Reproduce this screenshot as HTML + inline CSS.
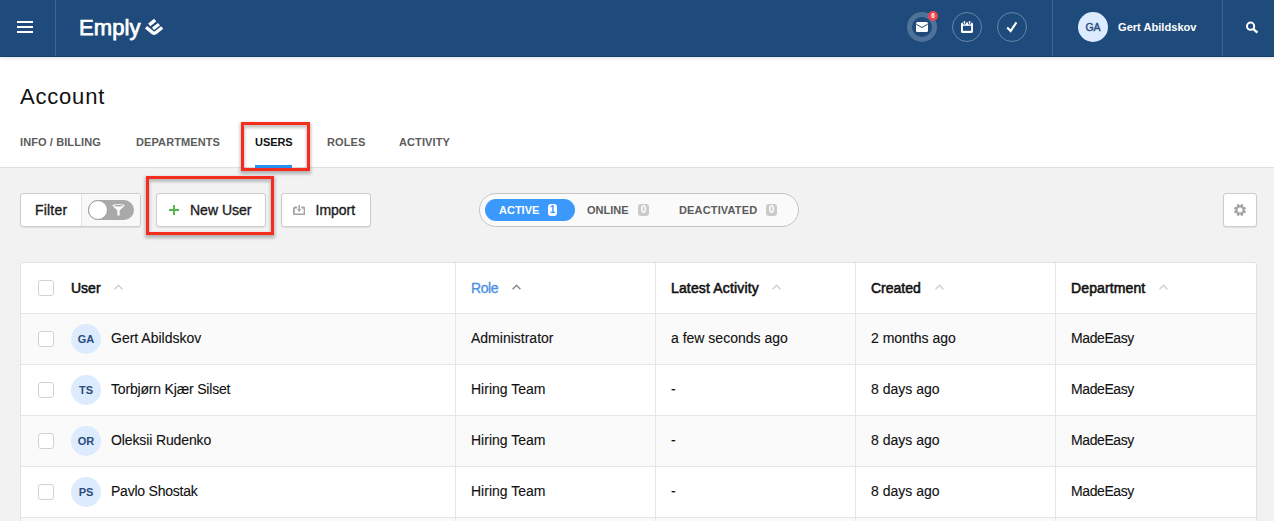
<!DOCTYPE html>
<html>
<head>
<meta charset="utf-8">
<title>Account</title>
<style>
*{box-sizing:border-box;margin:0;padding:0}
html,body{width:1274px;height:521px;overflow:hidden}
body{position:relative;background:#f2f2f2;font-family:"Liberation Sans",sans-serif;color:#111;font-size:14px}
.abs{position:absolute}
/* header */
#hdr{position:absolute;left:0;top:0;width:1274px;height:57px;background:#1e4b7b;border-bottom:1px solid #133f70;box-shadow:0 1px 4px rgba(0,0,0,.13);z-index:5}
.vdiv{position:absolute;top:0;width:1px;height:56px;background:rgba(255,255,255,.14)}
.bar{position:absolute;left:17px;width:16px;height:2px;background:#fff}
#logo{position:absolute;left:79px;top:14.6px;font-size:22px;line-height:26px;color:#fff;letter-spacing:.1px;-webkit-text-stroke:.75px #fff}
.circ{position:absolute;top:12px;width:30px;height:30px;border-radius:50%}
#uname{position:absolute;left:1118px;top:20px;font-size:11.1px;line-height:14px;font-weight:bold;color:#fff;white-space:nowrap}
/* title / tabs */
#top{position:absolute;left:0;top:57px;width:1274px;height:111px;background:#fff;border-bottom:1px solid #dfdfdf}
#title{position:absolute;left:20px;top:83px;font-size:22px;line-height:28px;color:#111;white-space:nowrap;letter-spacing:.8px}
.tab{position:absolute;top:135px;font-size:11px;line-height:14px;font-weight:bold;color:#5c5c5c;white-space:nowrap;letter-spacing:.1px}
.red{position:absolute;border:3px solid #f52c1e;box-shadow:0 2px 3px 1px rgba(0,0,0,.26), inset 0 2px 3px 1px rgba(0,0,0,.22);z-index:4}
/* toolbar */
.btn{position:absolute;top:193px;height:34px;background:#fff;border:1px solid #cdcdcd;border-radius:3px;box-shadow:0 1px 1px rgba(0,0,0,.08)}
.btxt{position:absolute;top:8px;font-size:14px;line-height:16px;white-space:nowrap;color:#1c1c1c;-webkit-text-stroke:.35px #1c1c1c}
.seg{position:absolute;font-size:11px;line-height:14px;font-weight:bold;white-space:nowrap;top:203px;color:#5a5a5a}
.bdg{position:absolute;top:204px;width:11px;height:12px;border-radius:3px;background:#c9c9c9;color:#fff;font-size:10px;line-height:12px;font-weight:bold;text-align:center}
/* table */
#tbl{position:absolute;left:20px;top:262px;width:1237px;height:300px;background:#fff;border:1px solid #e2e2e2;border-radius:3px;overflow:hidden}
.row{position:absolute;left:0;width:1235px;height:51px;border-top:1px solid #e6e6e6}
.row.odd{background:#fafafa}
.cdiv{position:absolute;top:0;width:1px;height:300px;background:#e6e6e6}
.cb{position:absolute;left:17px;width:16px;height:16px;border:1px solid #d2d2d2;border-radius:3px;background:#fff}
.th{position:absolute;top:17.5px;font-size:14px;line-height:16px;white-space:nowrap;color:#111;-webkit-text-stroke:.55px}
.td{position:absolute;top:16px;font-size:14px;line-height:16px;white-space:nowrap;color:#111;-webkit-text-stroke:.12px #111}
.av{position:absolute;left:50px;top:10px;width:30px;height:30px;border-radius:50%;background:#dcebfd;color:#2a4c7c;font-size:11px;line-height:30px;font-weight:bold;text-align:center}
.car{position:absolute;top:21px;width:9px;height:6px}
</style>
</head>
<body>

<!-- HEADER -->
<div id="hdr">
  <div class="bar" style="top:21px"></div>
  <div class="bar" style="top:26px"></div>
  <div class="bar" style="top:31px"></div>
  <div class="vdiv" style="left:55px"></div>
  <div id="logo">Emply</div>
  <svg class="abs" style="left:143px;top:17px" width="22" height="20" viewBox="143 16.2 22 20">
    <g fill="none" stroke="#fff" stroke-width="3.3">
      <path d="M146 26.4 L152.6 31.8 Q154.3 33.2 156 31.8 L162.2 26.6" stroke-linejoin="round"/>
      <path d="M149.2 24.1 L155.2 19.3"/>
      <path d="M153 28.0 L159 23.4"/>
    </g>
  </svg>

  <!-- mail -->
  <div class="circ" style="left:907px;border:5px solid rgba(255,255,255,.22)"></div>
  <svg class="abs" style="left:916px;top:22px" width="12" height="10" viewBox="0 0 12 10">
    <rect x="0" y="0" width="12" height="10" rx="1.5" fill="#fff"/>
    <path d="M0.3 2.2 L6 5.6 L11.7 2.2" fill="none" stroke="#1e4b7b" stroke-width="1"/>
  </svg>
  <div class="abs" style="left:928px;top:11px;width:10px;height:10px;border-radius:50%;background:#f0444c;color:#fff;font-size:6.5px;line-height:10px;font-weight:bold;text-align:center">6</div>

  <!-- calendar -->
  <div class="circ" style="left:952px;border:1px solid rgba(255,255,255,.32)"></div>
  <svg class="abs" style="left:961px;top:21px" width="12" height="12" viewBox="0 0 12 12">
    <rect x="0" y="1.5" width="12" height="10.5" rx="1.6" fill="#fff"/>
    <rect x="1.9" y="4.8" width="8.2" height="5" fill="#1e4b7b"/>
    <rect x="1.9" y="0" width="3" height="3.5" rx="1.2" fill="#1e4b7b"/>
    <rect x="7.1" y="0" width="3" height="3.5" rx="1.2" fill="#1e4b7b"/>
    <rect x="2.7" y="0" width="1.4" height="2.8" rx=".6" fill="#fff"/>
    <rect x="7.9" y="0" width="1.4" height="2.8" rx=".6" fill="#fff"/>
  </svg>

  <!-- check -->
  <div class="circ" style="left:997px;border:1px solid rgba(255,255,255,.32)"></div>
  <svg class="abs" style="left:1006px;top:21px" width="12" height="12" viewBox="0 0 12 12">
    <path d="M1.2 6.6 L4.6 10 L10.4 1.4" fill="none" stroke="#fff" stroke-width="2.1"/>
  </svg>

  <div class="vdiv" style="left:1052px"></div>
  <div class="circ" style="left:1078px;background:#dcebfd;color:#2d4f80;font-size:10.5px;line-height:30px;text-align:center;-webkit-text-stroke:.45px #2d4f80">GA</div>
  <div id="uname">Gert Abildskov</div>
  <div class="vdiv" style="left:1222px"></div>
  <svg class="abs" style="left:1245px;top:21px" width="14" height="13" viewBox="0 0 14 13">
    <circle cx="5.6" cy="5.2" r="3.6" fill="none" stroke="#fff" stroke-width="2"/>
    <path d="M8.2 7.8 L12.4 11.6" stroke="#fff" stroke-width="2.4" fill="none"/>
  </svg>
</div>

<!-- TITLE + TABS -->
<div id="top"></div>
<div id="title">Account</div>
<div class="tab" style="left:20px">INFO / BILLING</div>
<div class="tab" style="left:136px">DEPARTMENTS</div>
<div class="tab" style="left:255px;color:#111;letter-spacing:-.05px">USERS</div>
<div class="tab" style="left:327px">ROLES</div>
<div class="tab" style="left:399px">ACTIVITY</div>
<div class="abs" style="left:255px;top:165px;width:37px;height:3px;background:#2593f2"></div>
<div class="red" style="left:241px;top:122px;width:69px;height:49px"></div>

<!-- TOOLBAR -->
<div class="btn" style="left:20px;width:121px;overflow:hidden">
  <div class="abs" style="left:60px;top:0;width:60px;height:32px;background:#f8f8f8;border-left:1px solid #e2e2e2"></div>
  <div class="btxt" style="left:14px;letter-spacing:.2px">Filter</div>
  <div class="abs" style="left:67px;top:6px;width:46px;height:20px;border-radius:10px;background:#a9a9a9"></div>
  <div class="abs" style="left:67px;top:6px;width:20px;height:20px;border-radius:50%;background:#fff;border:1px solid #9c9c9c"></div>
  <svg class="abs" style="left:91px;top:10px" width="13" height="12" viewBox="0 0 13 12">
    <path d="M0.3 1.6 Q0.3 0.2 6.5 0.2 Q12.7 0.2 12.7 1.6 L7.6 6.6 L7.6 11.6 L5.4 11.6 L5.4 6.6 Z" fill="#fff"/>
    <ellipse cx="6.5" cy="1.7" rx="4.6" ry=".7" fill="#a9a9a9"/>
  </svg>
</div>

<div class="btn" style="left:156px;width:110px">
  <svg class="abs" style="left:12px;top:11px" width="10" height="10" viewBox="0 0 10 10"><path d="M5 0V10M0 5H10" stroke="#4fb848" stroke-width="1.9" fill="none"/></svg>
  <div class="btxt" style="left:33px">New User</div>
</div>
<div class="red" style="left:146px;top:176px;width:128px;height:59px"></div>

<div class="btn" style="left:281px;width:90px">
  <svg class="abs" style="left:11px;top:10.6px" width="12.4" height="10.4" viewBox="0 0 12.4 10.4">
    <path d="M4 2.5 H2.2 Q.9 2.5 .9 3.8 V8.2 Q.9 9.5 2.2 9.5 H10.2 Q11.5 9.5 11.5 8.2 V3.8 Q11.5 2.5 10.2 2.5 H8.4" fill="none" stroke="#a2a2a2" stroke-width="1.8"/>
    <path d="M6.2 0 V5" stroke="#a2a2a2" stroke-width="1.5" fill="none"/>
    <path d="M3.9 4.3 H8.5 L6.2 7 Z" fill="#a2a2a2"/>
  </svg>
  <div class="btxt" style="left:33.5px">Import</div>
</div>

<!-- segmented -->
<div class="abs" style="left:479px;top:193px;width:320px;height:34px;border-radius:17px;background:#fafafa;border:1px solid #c4c4c4"></div>
<div class="abs" style="left:485px;top:199px;width:90px;height:22px;border-radius:11px;background:#3b99fc"></div>
<div class="seg" style="left:499px;color:#fff">ACTIVE</div>
<div class="bdg" style="left:548px;background:#fff;color:#3b99fc;width:9px">1</div>
<div class="seg" style="left:587px">ONLINE</div>
<div class="bdg" style="left:638px">0</div>
<div class="seg" style="left:679px;letter-spacing:.15px">DEACTIVATED</div>
<div class="bdg" style="left:766px">0</div>

<!-- gear -->
<div class="btn" style="left:1223px;width:34px">
  <svg class="abs" style="left:10px;top:10px" width="12" height="12" viewBox="-6 -6 12 12">
    <g fill="#a3a3a3">
      <rect x="-1.25" y="-6" width="2.5" height="12" rx=".3" transform="rotate(22.5)"/>
      <rect x="-1.25" y="-6" width="2.5" height="12" rx=".3" transform="rotate(67.5)"/>
      <rect x="-1.25" y="-6" width="2.5" height="12" rx=".3" transform="rotate(112.5)"/>
      <rect x="-1.25" y="-6" width="2.5" height="12" rx=".3" transform="rotate(157.5)"/>
      <circle r="4.6"/>
    </g>
    <circle r="2.5" fill="#fff"/>
  </svg>
</div>

<!-- TABLE -->
<div id="tbl">
  <div class="row" style="top:-1px;border-top:none;height:51px">
    <div class="cb" style="top:18px"></div>
    <div class="th" style="left:50px">User</div>
    <div class="th" style="left:450px;color:#4a90e2;letter-spacing:-.4px;-webkit-text-stroke:.3px #4a90e2">Role</div>
    <div class="th" style="left:650px;letter-spacing:.15px">Latest Activity</div>
    <div class="th" style="left:850px">Created</div>
    <div class="th" style="left:1050px;letter-spacing:.12px">Department</div>
  </div>
  <div class="row odd" style="top:50px">
    <div class="cb" style="top:17px"></div><div class="av">GA</div>
    <div class="td" style="left:90px">Gert Abildskov</div>
    <div class="td" style="left:450px">Administrator</div>
    <div class="td" style="left:650px">a few seconds ago</div>
    <div class="td" style="left:850px">2 months ago</div>
    <div class="td" style="left:1050px;letter-spacing:-.4px">MadeEasy</div>
  </div>
  <div class="row" style="top:101px">
    <div class="cb" style="top:17px"></div><div class="av">TS</div>
    <div class="td" style="left:90px;letter-spacing:-.18px">Torbjørn Kjær Silset</div>
    <div class="td" style="left:450px">Hiring Team</div>
    <div class="td" style="left:650px">-</div>
    <div class="td" style="left:850px">8 days ago</div>
    <div class="td" style="left:1050px;letter-spacing:-.4px">MadeEasy</div>
  </div>
  <div class="row odd" style="top:152px">
    <div class="cb" style="top:17px"></div><div class="av">OR</div>
    <div class="td" style="left:90px;letter-spacing:-.12px">Oleksii Rudenko</div>
    <div class="td" style="left:450px">Hiring Team</div>
    <div class="td" style="left:650px">-</div>
    <div class="td" style="left:850px">8 days ago</div>
    <div class="td" style="left:1050px;letter-spacing:-.4px">MadeEasy</div>
  </div>
  <div class="row" style="top:203px">
    <div class="cb" style="top:17px"></div><div class="av">PS</div>
    <div class="td" style="left:90px;letter-spacing:-.22px">Pavlo Shostak</div>
    <div class="td" style="left:450px">Hiring Team</div>
    <div class="td" style="left:650px">-</div>
    <div class="td" style="left:850px">8 days ago</div>
    <div class="td" style="left:1050px;letter-spacing:-.4px">MadeEasy</div>
  </div>
  <div class="row odd" style="top:254px"></div>
  <div class="cdiv" style="left:434px"></div>
  <div class="cdiv" style="left:634px"></div>
  <div class="cdiv" style="left:834px"></div>
  <div class="cdiv" style="left:1034px"></div>
  <!-- carets -->
  <svg class="car" style="left:93px" viewBox="0 0 9 6"><path d="M.6 5.2 L4.5 1.2 L8.4 5.2" fill="none" stroke="#cfcfcf" stroke-width="1.5"/></svg>
  <svg class="car" style="left:491px" viewBox="0 0 9 6"><path d="M.6 5.2 L4.5 1.2 L8.4 5.2" fill="none" stroke="#8a8a8a" stroke-width="1.5"/></svg>
  <svg class="car" style="left:751px" viewBox="0 0 9 6"><path d="M.6 5.2 L4.5 1.2 L8.4 5.2" fill="none" stroke="#cfcfcf" stroke-width="1.5"/></svg>
  <svg class="car" style="left:914px" viewBox="0 0 9 6"><path d="M.6 5.2 L4.5 1.2 L8.4 5.2" fill="none" stroke="#cfcfcf" stroke-width="1.5"/></svg>
  <svg class="car" style="left:1138px" viewBox="0 0 9 6"><path d="M.6 5.2 L4.5 1.2 L8.4 5.2" fill="none" stroke="#cfcfcf" stroke-width="1.5"/></svg>
</div>

</body>
</html>
